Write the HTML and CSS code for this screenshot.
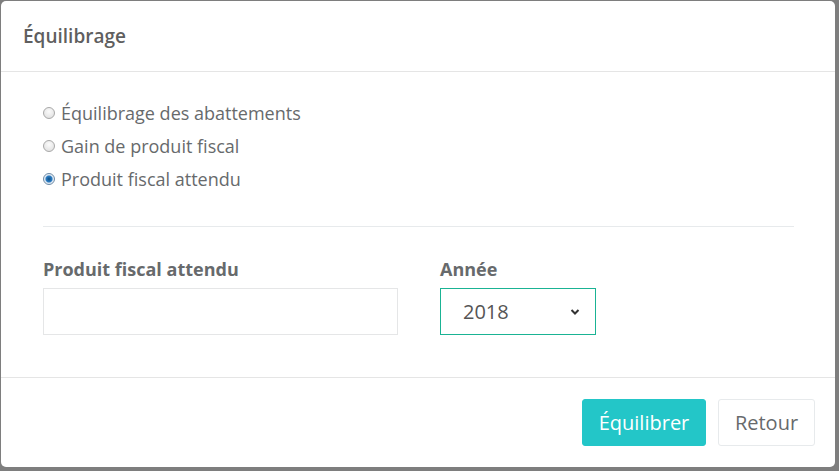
FILE: index.html
```html
<!DOCTYPE html>
<html lang="fr">
<head>
<meta charset="utf-8">
<title>Équilibrage</title>
<link rel="stylesheet" href="styles.css">
</head>
<body>
<div class="modal">
  <div class="modal-header">
    <h4 class="modal-title">Équilibrage</h4>
  </div>
  <div class="modal-body">
    <div class="radios">
      <label class="radio"><span class="dot"></span>Équilibrage des abattements</label>
      <label class="radio"><span class="dot"></span>Gain de produit fiscal</label>
      <label class="radio"><span class="dot checked"></span>Produit fiscal attendu</label>
    </div>
    <div class="sep"></div>
    <div class="fields">
      <div class="field field-left">
        <div class="field-label">Produit fiscal attendu</div>
        <div class="input"></div>
      </div>
      <div class="field field-right">
        <div class="field-label">Année</div>
        <div class="select">
          <span>2018</span>
          <svg class="chev" width="10" height="8" viewBox="0 0 10 8"><path d="M1.5 2 L5 5.5 L8.5 2" fill="none" stroke="#333" stroke-width="2"/></svg>
        </div>
      </div>
    </div>
  </div>
  <div class="modal-footer">
    <button class="btn btn-info">Équilibrer</button>
    <button class="btn btn-white">Retour</button>
  </div>
</div>
</body>
</html>
```
FILE: styles.css
```css
html, body {
  margin: 0;
  padding: 0;
}
body {
  background: #7e7e7e;
  width: 839px;
  height: 471px;
  overflow: hidden;
  font-family: "Open Sans", sans-serif;
  color: #676a6c;
}
.modal {
  margin: 1px 4px 0 1px;
  width: 834px;
  height: 466px;
  background: #fff;
  border-radius: 5px;
  display: flex;
  flex-direction: column;
}
.modal-header {
  height: 70px;
  border-bottom: 1px solid #e5e5e5;
  display: flex;
  align-items: center;
  padding-left: 22px;
}
.modal-title {
  margin: 0;
  font-size: 19px;
  font-weight: 600;
  color: #5f5f5f;
  padding-bottom: 1px;
}
.modal-body {
  flex: 1;
  padding: 24px 41px 0 42px;
}
.radios {
  display: flex;
  flex-direction: column;
}
.radio {
  height: 33px;
  display: flex;
  align-items: center;
  font-size: 18px;
  color: #676a6c;
}
.dot {
  width: 10px;
  height: 10px;
  border-radius: 50%;
  border: 1px solid #a8a8a8;
  background: radial-gradient(circle at 50% 35%, #fbfbfb 0%, #dcdcdc 100%);
  margin-right: 6px;
  margin-top: 1px;
  flex: none;
}
.dot.checked {
  border-color: #6d8aa5;
  background: radial-gradient(circle at 50% 50%, #0c4f86 0%, #2c7cc2 42%, #dfe9f3 58%, #f5f8fb 100%);
}
.sep {
  margin-top: 31px;
  border-top: 1px solid #e7eaec;
}
.fields {
  display: flex;
  gap: 42px;
  padding-top: 30px;
}
.field-left {
  width: 355px;
}
.field-label {
  font-size: 18px;
  font-weight: 700;
  color: #676a6c;
  height: 24px;
  line-height: 24px;
  margin-bottom: 7px;
}
.input {
  height: 45px;
  border: 1px solid #e5e6e7;
}
.select {
  width: 156px;
  height: 47px;
  border: 1px solid #1ab394;
  display: flex;
  align-items: center;
  justify-content: space-between;
  padding: 0 15px 0 22px;
  box-sizing: border-box;
  font-size: 20px;
  color: #555;
}
.chev {
  display: block;
}
.modal-footer {
  height: 90px;
  border-top: 1px solid #e5e5e5;
  display: flex;
  align-items: center;
  justify-content: flex-end;
  gap: 12px;
  padding-right: 20px;
  box-sizing: border-box;
}
.btn {
  height: 47px;
  font-family: "Open Sans", sans-serif;
  font-size: 20px;
  border-radius: 3px;
  padding: 0;
  cursor: pointer;
}
.btn-info {
  background: #23c6c8;
  border: 1px solid #23c6c8;
  color: #fff;
  width: 124px;
}
.btn-white {
  background: #fff;
  border: 1px solid #e7eaec;
  color: #676a6c;
  width: 97px;
}
```
